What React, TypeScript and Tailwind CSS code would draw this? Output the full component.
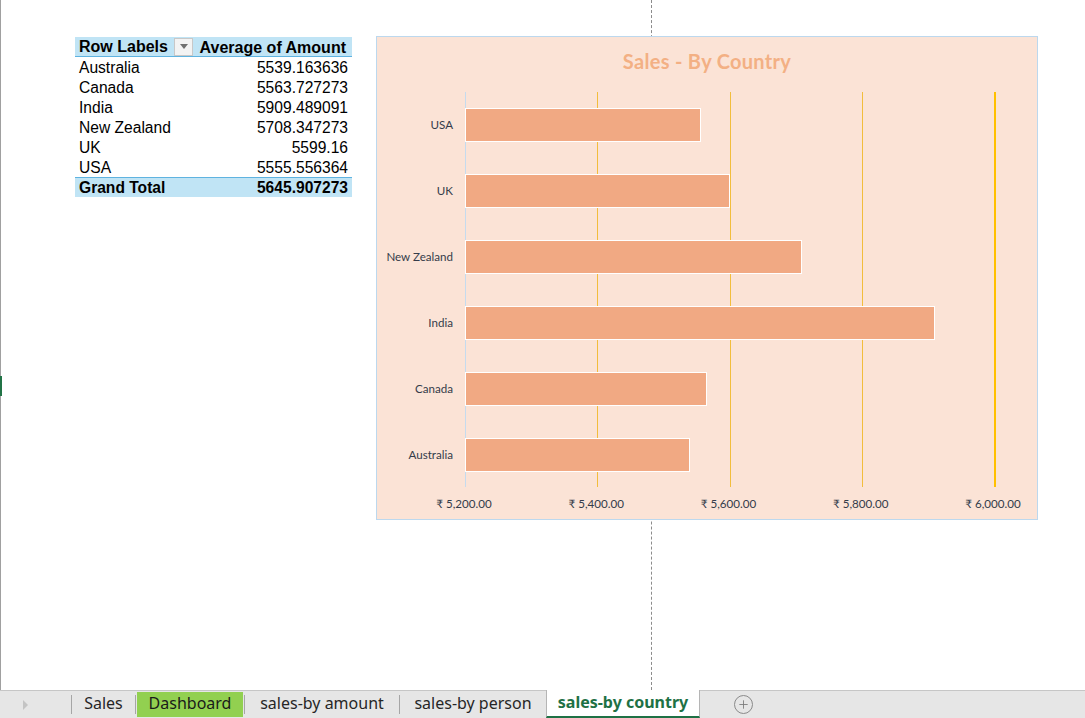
import { Plus } from "lucide-react";

type Row = { label: string; value: number; shown: string };

const rows: Row[] = [
  { label: "Australia", value: 5539.163636, shown: "5539.163636" },
  { label: "Canada", value: 5563.727273, shown: "5563.727273" },
  { label: "India", value: 5909.489091, shown: "5909.489091" },
  { label: "New Zealand", value: 5708.347273, shown: "5708.347273" },
  { label: "UK", value: 5599.16, shown: "5599.16" },
  { label: "USA", value: 5555.556364, shown: "5555.556364" },
];

const AXIS_MIN = 5200;
const PX_PER_UNIT = 529 / 800;
const ticks = ["₹ 5,200.00", "₹ 5,400.00", "₹ 5,600.00", "₹ 5,800.00", "₹ 6,000.00"];

function PivotTable() {
  return (
    <div className="w-[277px] font-['Liberation_Sans',Arial,sans-serif] text-[15.6px] text-black leading-[20px]">
      <div className="flex h-[20px] bg-[#c0e4f5] border-b border-[#5fb3e0] font-bold text-[16px] leading-[21px]">
        <div className="w-[120px] flex items-center pl-[4px] pr-[2px] justify-between">
          <span>Row Labels</span>
          <span className="w-[19px] h-[18px] bg-[#f3f3f3] border border-[#c8c8c8] flex items-center justify-center">
            <span className="w-0 h-0 border-l-[4px] border-r-[4px] border-t-[5px] border-l-transparent border-r-transparent border-t-[#707070]" />
          </span>
        </div>
        <div className="flex-1 text-right pr-[6px]">Average of Amount</div>
      </div>
      {rows.map((r) => (
        <div key={r.label} className="flex h-[20px] leading-[22px]">
          <div className="w-[120px] pl-[4px]">{r.label}</div>
          <div className="flex-1 text-right pr-[4px]">{r.shown}</div>
        </div>
      ))}
      <div className="flex h-[20px] bg-[#c0e4f5] border-t border-[#5fb3e0] font-bold leading-[20px]">
        <div className="w-[120px] pl-[4px]">Grand Total</div>
        <div className="flex-1 text-right pr-[4px]">5645.907273</div>
      </div>
    </div>
  );
}

function Chart() {
  const ordered = [...rows].reverse();
  return (
    <div className="w-[662px] h-[484px] bg-[#fbe3d6] border border-[#bcd8ee] flex flex-col font-['Lato','Open_Sans',sans-serif]">
      <div className="h-[55px] flex justify-center pt-[9px]">
        <span className="text-[20px] font-bold text-[#f3b084] tracking-[0.3px]">Sales - By Country</span>
      </div>
      <div className="flex">
        <div className="w-[88px] flex flex-col">
          {ordered.map((r) => (
            <div key={r.label} className="h-[66px] flex items-center justify-end pr-[12px] text-[11.6px] text-[#343c4a]">
              {r.label}
            </div>
          ))}
        </div>
        <div className="relative w-[540px] h-[395px] border-l border-[#c5dbee]">
          <div className="absolute top-0 bottom-0 left-[131px] w-px bg-[#f2bd3c]" />
          <div className="absolute top-0 bottom-0 left-[264px] w-px bg-[#f2bd3c]" />
          <div className="absolute top-0 bottom-0 left-[396px] w-px bg-[#f2bd3c]" />
          <div className="absolute top-0 bottom-0 left-[528px] w-[2px] bg-[#ffc000]" />
          <div className="relative flex flex-col -ml-px">
            {ordered.map((r) => (
              <div key={r.label} className="h-[66px] flex items-center">
                <div
                  className="h-[34px] bg-[#f1a983] border border-white"
                  style={{ width: `${(r.value - AXIS_MIN) * PX_PER_UNIT + 1}px` }}
                />
              </div>
            ))}
          </div>
        </div>
      </div>
      <div className="relative h-[30px] ml-[88px]">
        {ticks.map((t, i) => (
          <span
            key={t}
            className="absolute top-[7px] -translate-x-1/2 text-[11.6px] text-[#343c4a] whitespace-nowrap"
            style={{ left: `${i * 132.25 - 1}px` }}
          >
            {t}
          </span>
        ))}
      </div>
    </div>
  );
}

function TabBar() {
  return (
    <div className="h-[28px] bg-[#e6e6e6] border-t border-[#c6c6c6] flex items-stretch font-['Noto_Sans','Open_Sans',sans-serif] text-[16px] text-[#262626]">
      <div className="w-[71px] flex items-center pl-[23px]">
        <span className="w-0 h-0 border-t-[5px] border-b-[5px] border-l-[5px] border-t-transparent border-b-transparent border-l-[#c4c4c4]" />
      </div>
      <div className="w-px bg-[#a6a6a6] my-[4px]" />
      <div className="w-[63px] flex items-center justify-center pb-[3px]">Sales</div>
      <div className="w-px bg-[#a6a6a6] my-[4px]" />
      <div className="w-[106px] ml-[1px] mt-[1px] mb-[1px] bg-[#92d050] flex items-center justify-center text-[#1a1a1a] pb-[3px]">Dashboard</div>
      <div className="w-px bg-[#a6a6a6] my-[4px] ml-[1px]" />
      <div className="w-[154px] flex items-center justify-center pb-[3px]">sales-by amount</div>
      <div className="w-px bg-[#a6a6a6] my-[4px]" />
      <div className="w-[146px] flex items-center justify-center pb-[3px]">sales-by person</div>
      <div className="w-[154px] -mt-px bg-white border-l border-r border-[#b5b5b5] border-b-2 border-b-[#1e7145] flex items-center justify-center font-bold text-[#1e7145] pb-[2px]">
        sales-by country
      </div>
      <div className="w-[86px] flex items-center justify-center">
        <span className="w-[19px] h-[19px] rounded-full border border-[#8a8a8a] flex items-center justify-center">
          <Plus size={13} strokeWidth={1.6} color="#7a7a7a" />
        </span>
      </div>
    </div>
  );
}

export default function App() {
  return (
    <div className="w-[1085px] h-[718px] bg-white flex flex-col overflow-hidden">
      <div className="relative h-[690px] border-l border-[#a0a0a0] flex">
        <div className="absolute left-[-1px] top-[376px] w-[2px] h-[20px] bg-[#217346]" />
        <div className="absolute left-[650px] top-0 h-[690px] border-l border-dashed border-[#8c8c8c]" />
        <div className="ml-[74px] mt-[37px]">
          <PivotTable />
        </div>
        <div className="ml-[24px] mt-[36px] relative">
          <Chart />
        </div>
      </div>
      <TabBar />
    </div>
  );
}
